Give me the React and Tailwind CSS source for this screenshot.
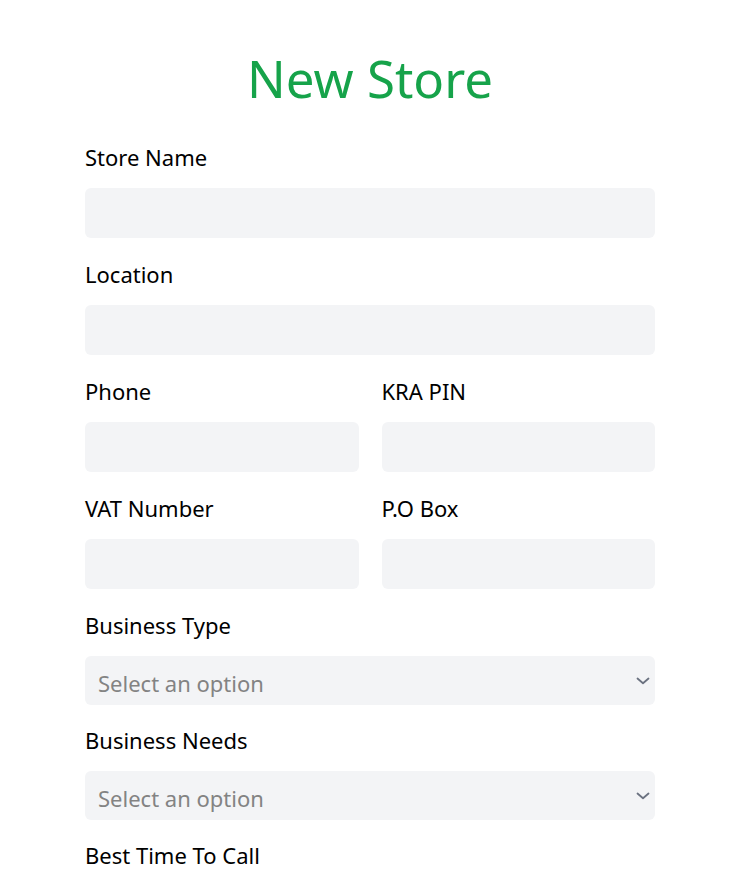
import React from "react";

function Label({ children }) {
  return <label className="block text-[22px] leading-[28px] text-black mb-[17px]">{children}</label>;
}

function Input() {
  return <div className="h-[50px] w-full rounded-md bg-[#f3f4f6]" />;
}

function Select() {
  return (
    <div className="h-[49px] w-full rounded-md bg-[#f3f4f6] flex items-center justify-between pl-[13px] pr-[5px]">
      <span className="text-[22px] text-[#838383] leading-[28px] pt-[4px]">Select an option</span>
      <svg width="14" height="8" viewBox="0 0 14 8" fill="none" className="text-[#6b7280]">
        <path d="M1.5 1.5L7 6.2l5.5-4.7" stroke="currentColor" strokeWidth="1.8" strokeLinecap="round" strokeLinejoin="round" />
      </svg>
    </div>
  );
}

export default function App() {
  return (
    <div className="h-[880px] overflow-hidden bg-white pl-[85px]" style={{ fontFamily: '"Noto Sans", "Open Sans", sans-serif' }}>
      <div className="w-[570px] pt-[48px]">
        <h1 className="text-center text-[#16a34a] text-[51px] leading-[60px] mb-[35px]">New Store</h1>
        <div className="mb-[22px]">
          <Label>Store Name</Label>
          <Input />
        </div>
        <div className="mb-[22px]">
          <Label>Location</Label>
          <Input />
        </div>
        <div className="grid grid-cols-2 gap-x-[23px] mb-[22px]">
          <div>
            <Label>Phone</Label>
            <Input />
          </div>
          <div>
            <Label>KRA PIN</Label>
            <Input />
          </div>
        </div>
        <div className="grid grid-cols-2 gap-x-[23px] mb-[22px]">
          <div>
            <Label>VAT Number</Label>
            <Input />
          </div>
          <div>
            <Label>P.O Box</Label>
            <Input />
          </div>
        </div>
        <div className="mb-[21px]">
          <Label>Business Type</Label>
          <Select />
        </div>
        <div className="mb-[21px]">
          <Label>Business Needs</Label>
          <Select />
        </div>
        <div>
          <Label>Best Time To Call</Label>
          <Select />
        </div>
      </div>
    </div>
  );
}
